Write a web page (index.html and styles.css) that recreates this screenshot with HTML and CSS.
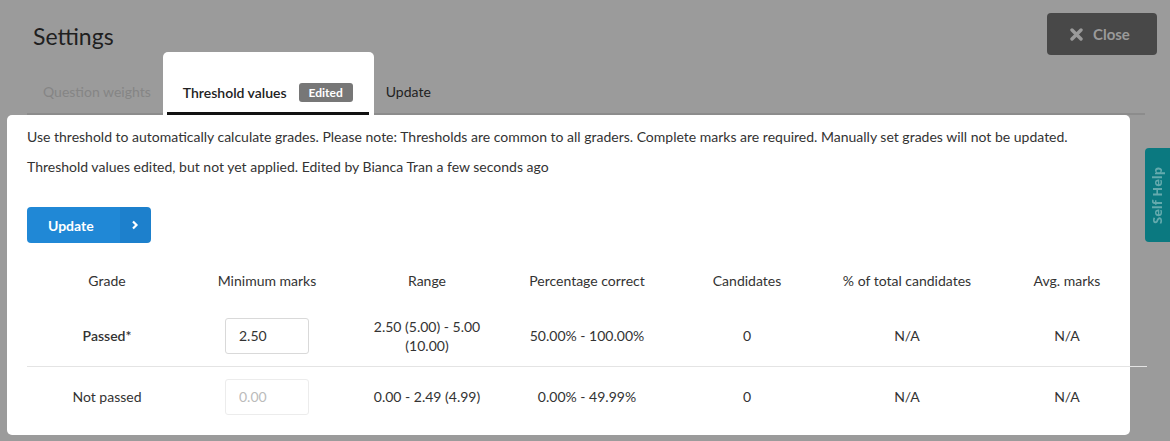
FILE: index.html
```html
<!DOCTYPE html>
<html lang="en">
<head>
    <meta charset="UTF-8">
    <meta name="viewport" content="width=device-width, initial-scale=1.0">
    <title>Settings</title>
    <link rel="stylesheet" href="styles.css">
</head>
<body>
    <div class="page">
        <div class="header">
            <h1>Settings</h1>
            <button class="close-btn">
                <svg width="13" height="13" viewBox="0 0 13 13"><path d="M2 2 L11 11 M11 2 L2 11" stroke="currentColor" stroke-width="3.4" stroke-linecap="round"/></svg>
                Close
            </button>
        </div>

        <ul class="tabs">
            <li class="tab">Question weights</li>
            <li class="tab active">Threshold values <span class="badge">Edited</span></li>
            <li class="tab dark">Update</li>
        </ul>

        <div class="panel">
            <p>Use threshold to automatically calculate grades. Please note: Thresholds are common to all graders. Complete marks are required. Manually set grades will not be updated.</p>
            <p>Threshold values edited, but not yet applied. Edited by Bianca Tran a few seconds ago</p>

            <div class="split-btn">
                <span class="main">Update</span>
                <span class="arrow">
                    <svg width="8" height="10" viewBox="0 0 8 10"><path d="M2 1.5 L5.5 5 L2 8.5" fill="none" stroke="#fff" stroke-width="2.2"/></svg>
                </span>
            </div>

            <table class="grades">
                <thead>
                    <tr>
                        <th>Grade</th>
                        <th>Minimum marks</th>
                        <th>Range</th>
                        <th>Percentage correct</th>
                        <th>Candidates</th>
                        <th>% of total candidates</th>
                        <th>Avg. marks</th>
                    </tr>
                </thead>
                <tbody>
                    <tr>
                        <td class="grade-name">Passed*</td>
                        <td><input type="text" value="2.50"></td>
                        <td>2.50 (5.00) - 5.00 (10.00)</td>
                        <td>50.00% - 100.00%</td>
                        <td>0</td>
                        <td>N/A</td>
                        <td>N/A</td>
                    </tr>
                    <tr>
                        <td>Not passed</td>
                        <td><input type="text" value="0.00" disabled></td>
                        <td>0.00 - 2.49 (4.99)</td>
                        <td>0.00% - 49.99%</td>
                        <td>0</td>
                        <td>N/A</td>
                        <td>N/A</td>
                    </tr>
                </tbody>
            </table>
        </div>
    </div>

    <div class="self-help">Self Help</div>
</body>
</html>
```

FILE: styles.css
```css
body {
    margin: 0;
    background-color: #9b9b9b;
    font-family: Lato, "Open Sans", sans-serif;
    font-size: 14px;
    color: #333;
}
.page {
    padding: 13px 0 0 7px;
    width: 1123px;
}
.header {
    display: flex;
    justify-content: space-between;
    align-items: flex-start;
    height: 39px;
}
h1 {
    margin: 9px 0 0 26px;
    font-size: 23px;
    font-weight: normal;
    color: #1f1f1f;
}
.close-btn {
    display: flex;
    align-items: center;
    gap: 10px;
    width: 110px;
    height: 42px;
    margin-right: -27px;
    padding: 0 0 0 23px;
    background-color: #484848;
    color: #9a9a9a;
    border: none;
    border-radius: 4px;
    font-family: Lato, sans-serif;
    font-size: 15px;
    font-weight: bold;
    position: relative;
    z-index: 1;
}
.tabs {
    display: flex;
    list-style: none;
    margin: 0 0 0 20px;
    padding: 0;
    width: 1118px;
    height: 61px;
    border-bottom: 2px solid #8c8c8c;
}
.tab {
    display: flex;
    align-items: center;
    padding: 18px 12px 0 12px;
    color: #858585;
    position: relative;
}
.tab:first-child {
    padding-left: 16px;
}
.tab.dark {
    color: #222;
}
.tab.active {
    background-color: #fff;
    color: #222;
    font-weight: 600;
    padding: 18px 21px 0 20px;
    border-radius: 5px 5px 0 0;
    margin-bottom: -2px;
}
.tab.active::after {
    content: "";
    position: absolute;
    left: 4px;
    right: 5px;
    bottom: 0;
    height: 3px;
    background-color: #111;
}
.badge {
    margin-left: 12px;
    padding: 2px 10px;
    background-color: #777;
    color: #fff;
    font-size: 12px;
    font-weight: bold;
    border-radius: 3px;
}
.panel {
    background-color: #fff;
    border-radius: 5px;
    padding: 13px 20px 9px 20px;
}
.panel p {
    margin: 0 0 12px;
    line-height: 18px;
}
.split-btn {
    display: inline-flex;
    height: 36px;
    margin-top: 19px;
    border-radius: 4px;
    overflow: hidden;
    color: #fff;
    font-weight: bold;
    font-size: 14px;
}
.split-btn .main {
    display: flex;
    align-items: center;
    padding: 0 26px 0 21px;
    background-color: #2088d6;
}
.split-btn .arrow {
    display: flex;
    align-items: center;
    justify-content: center;
    width: 31px;
    background-color: #1d80cc;
}
.grades {
    table-layout: fixed;
    border-collapse: collapse;
    width: 1120px;
    margin-top: 13px;
}
.grades th {
    height: 47px;
    font-weight: normal;
    color: #333;
}
.grades td {
    height: 59px;
    padding: 0 18px;
    text-align: center;
    line-height: 19px;
}
.grades tbody tr:first-child td {
    height: 61px;
    border-bottom: 1px solid #e4e4e4;
}
.grade-name {
    font-weight: 600;
}
.grades input {
    box-sizing: border-box;
    width: 84px;
    height: 36px;
    padding: 0 13px;
    border: 1px solid #d9d9d9;
    border-radius: 3px;
    font-family: Lato, sans-serif;
    font-size: 14px;
    color: #333;
    background-color: #fff;
}
.grades input:disabled {
    color: #bbb;
    border-color: #ececec;
}
.self-help {
    position: fixed;
    right: -6px;
    top: 148px;
    width: 31px;
    height: 94px;
    background-color: #0b7980;
    color: #64aaad;
    border-radius: 4px;
    writing-mode: vertical-rl;
    transform: rotate(180deg);
    display: flex;
    align-items: center;
    justify-content: center;
    font-family: "Open Sans", sans-serif;
    font-size: 13px;
    font-weight: bold;
    box-sizing: border-box;
    padding-left: 6px;
}
```
